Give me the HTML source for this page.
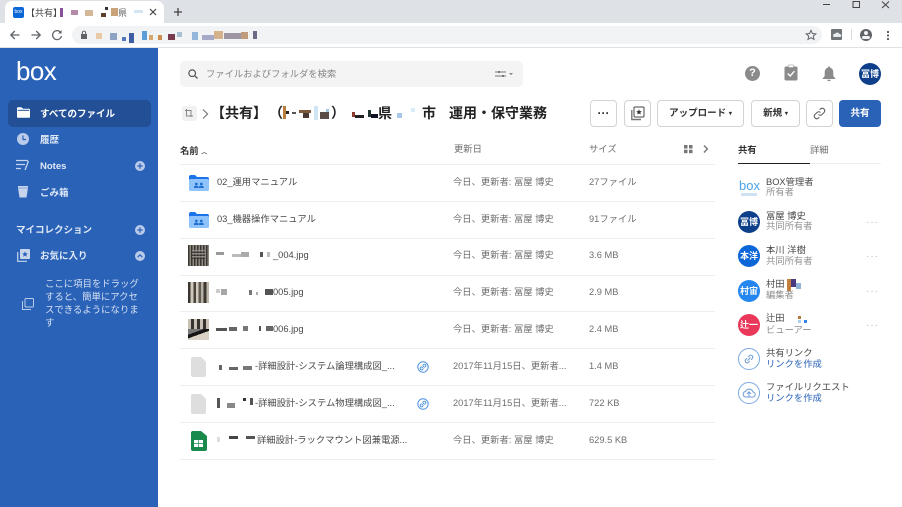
<!DOCTYPE html>
<html lang="ja"><head><meta charset="utf-8"><title>Box</title>
<style>
html,body{margin:0;padding:0;width:902px;height:507px;overflow:hidden;background:#fff}
body{position:relative;font-family:"Liberation Sans","Noto Sans CJK JP",sans-serif;color:#222;filter:blur(.3px)}
.a,.t{position:absolute}
.t{white-space:nowrap;line-height:14px;margin-top:2px}
.g{color:#6f6f6f;font-size:9.3px;margin-top:0}
.n{color:#484848;font-size:9.3px;margin-top:0}
.s{color:#fff;font-size:9.5px;font-weight:700}
.h{font-size:14px;line-height:16px;font-weight:700;color:#222;margin-top:0}
.line{position:absolute;left:180px;width:535px;height:1px;background:#eeeeee}
.btn{position:absolute;top:100px;height:27px;border:1px solid #d3d3d3;border-radius:4px;box-sizing:border-box;background:#fff;font-size:9.5px;font-weight:700;color:#333;text-align:center;line-height:25px}
.av{position:absolute;left:738px;width:22px;height:22px;border-radius:50%;color:#fff;font-size:9px;font-weight:700;text-align:center;line-height:22px}
.d{position:absolute;left:866px;color:#b5b5b5;font-size:10px;letter-spacing:1px;line-height:10px}
.b{position:absolute}
.thumb{position:absolute;left:188px;width:21px;height:21px}
svg{position:absolute;overflow:visible}
</style></head><body>

<!-- browser chrome -->
<div class="a" style="left:0;top:0;width:902px;height:23px;background:#dee1e6"></div>
<div class="a" style="left:5px;top:1px;width:159px;height:22px;background:#fff;border-radius:7px 7px 0 0"></div>
<div class="a" style="left:13px;top:7px;width:11px;height:11px;background:#0b66d8;border-radius:2px;color:#fff;font-size:5px;line-height:11px;text-align:center">box</div>
<div class="t" style="left:26px;top:4px;font-size:9px;color:#444">【共有】</div>
<div class="b" style="left:60px;top:8px;width:3px;height:9px;background:#8a4f96"></div>
<div class="b" style="left:71px;top:10px;width:7px;height:5px;background:#b58aa8"></div>
<div class="b" style="left:85px;top:10px;width:8px;height:6px;background:#d3b89a"></div>
<div class="b" style="left:101px;top:13px;width:5px;height:4px;background:#5d4030"></div>
<div class="b" style="left:105px;top:7px;width:3px;height:3px;background:#333"></div>
<div class="b" style="left:111px;top:8px;width:7px;height:8px;background:#c9a27a"></div>
<div class="t" style="left:118px;top:4px;font-size:9px;color:#666">県</div>
<div class="b" style="left:134px;top:10px;width:9px;height:3px;background:#d5e6f2"></div>
<svg style="left:149px;top:8px" width="8" height="8"><path d="M1 1L7 7M7 1L1 7" stroke="#444" stroke-width="1.2"/></svg>
<svg style="left:173px;top:7px" width="10" height="10"><path d="M5 1V9M1 5H9" stroke="#444" stroke-width="1.3"/></svg>
<svg style="left:822px;top:0" width="80" height="12"><path d="M1 4.5H8" stroke="#444" stroke-width="1"/><rect x="31" y="1.5" width="6.5" height="6" fill="none" stroke="#444" stroke-width="1"/><path d="M60 1.5L67 8M67 1.5L60 8" stroke="#444" stroke-width="1"/></svg>

<div class="a" style="left:0;top:23px;width:902px;height:24px;background:#fff"></div>
<div class="a" style="left:72px;top:26px;width:750px;height:18px;background:#f1f3f4;border-radius:9px"></div>
<svg style="left:9px;top:29px" width="12" height="12"><path d="M10.5 6H2M5.8 2L1.8 6L5.8 10" fill="none" stroke="#5f6368" stroke-width="1.3"/></svg>
<svg style="left:30px;top:29px" width="12" height="12"><path d="M1.5 6H10M6.2 2L10.2 6L6.2 10" fill="none" stroke="#5f6368" stroke-width="1.3"/></svg>
<svg style="left:51px;top:29px" width="12" height="12"><path d="M9.7 3.4A4.5 4.5 0 1 0 10.5 7" fill="none" stroke="#5f6368" stroke-width="1.2"/><path d="M10.6 1V4.5H7.1Z" fill="#5f6368"/></svg>
<svg style="left:80px;top:30px" width="8" height="10"><rect x="1" y="4" width="6" height="5" fill="#5f6368"/><path d="M2.3 4V2.8a1.7 1.7 0 0 1 3.4 0V4" fill="none" stroke="#5f6368"/></svg>
<!-- URL mosaic -->
<div class="b" style="left:96px;top:33px;width:6px;height:6px;background:#e8c9a8"></div>
<div class="b" style="left:110px;top:33px;width:7px;height:7px;background:#8ea2c2"></div>
<div class="b" style="left:122px;top:37px;width:4px;height:4px;background:#5577bb"></div>
<div class="b" style="left:129px;top:33px;width:5px;height:10px;background:#3e5fa5"></div>
<div class="b" style="left:142px;top:31px;width:5px;height:9px;background:#5e9ed6"></div>
<div class="b" style="left:149px;top:35px;width:4px;height:5px;background:#d7a56f"></div>
<div class="b" style="left:158px;top:35px;width:4px;height:5px;background:#cc8c4e"></div>
<div class="b" style="left:168px;top:34px;width:7px;height:6px;background:#7a3a4e"></div>
<div class="b" style="left:177px;top:32px;width:5px;height:5px;background:#a8bfd4"></div>
<div class="b" style="left:192px;top:32px;width:6px;height:8px;background:#94b6da"></div>
<div class="b" style="left:202px;top:35px;width:12px;height:5px;background:#a7a9c9"></div>
<div class="b" style="left:214px;top:31px;width:9px;height:8px;background:#d5b18c"></div>
<div class="b" style="left:224px;top:33px;width:17px;height:6px;background:#9d95a3"></div>
<div class="b" style="left:241px;top:32px;width:7px;height:7px;background:#c09a7c"></div>
<div class="b" style="left:253px;top:31px;width:4px;height:8px;background:#6e6a85"></div>
<svg style="left:805px;top:29px" width="12" height="12"><path d="M6 1.4L7.4 4.5L10.8 4.9L8.3 7.1L9 10.4L6 8.7L3 10.4L3.7 7.1L1.2 4.9L4.6 4.5Z" fill="none" stroke="#5f6368" stroke-width="1"/></svg>
<div class="a" style="left:831px;top:29px;width:11px;height:11px;background:#70757a;border-radius:1px"></div>
<svg style="left:833px;top:31px" width="8" height="7"><path d="M1 6H7A1.5 1.5 0 0 0 6.5 3A2.5 2.5 0 0 0 2 2.8A1.7 1.7 0 0 0 1 6Z" fill="#e8eaed"/></svg>
<div class="a" style="left:851px;top:29px;width:1px;height:11px;background:#dadce0"></div>
<div class="a" style="left:860px;top:29px;width:12px;height:12px;background:#5f6368;border-radius:50%"></div>
<div class="a" style="left:864px;top:31px;width:4px;height:4px;background:#f1f3f4;border-radius:50%"></div>
<div class="a" style="left:862px;top:36px;width:8px;height:2.5px;background:#f1f3f4;border-radius:2px"></div>
<div class="a" style="left:887px;top:31px;width:2px;height:2px;background:#5f6368;box-shadow:0 3.5px 0 #5f6368,0 7px 0 #5f6368"></div>
<div class="a" style="left:0;top:47px;width:902px;height:1px;background:#dfe1e5"></div>

<!-- sidebar -->
<div class="a" style="left:0;top:48px;width:158px;height:459px;background:#2a62b8"></div>
<div class="t" style="left:16px;top:52px;margin-top:1px;font-size:26px;line-height:36px;color:#fff;font-weight:400;letter-spacing:-.6px;font-family:'Liberation Sans',sans-serif">box</div>
<div class="a" style="left:8px;top:100px;width:143px;height:27px;background:#224f95;border-radius:5px"></div>
<svg style="left:17px;top:107px" width="13" height="11"><path d="M0 1.2Q0 .3 1 .3H4.5L6 1.8H12Q13 1.8 13 2.8V10Q13 10.8 12 10.8H1Q0 10.8 0 10Z" fill="#fff"/><rect x="0.8" y="2.8" width="11.4" height="1" fill="#224f95"/></svg>
<div class="t s" style="left:40px;top:106px">すべてのファイル</div>
<svg style="left:17px;top:133px" width="12" height="12"><circle cx="6" cy="6" r="6" fill="#b9cbe8"/><path d="M6 2.5V6.5H9" fill="none" stroke="#2a62b8" stroke-width="1.2"/></svg>
<div class="t s" style="left:40px;top:132px;color:#dfe8f6">履歴</div>
<svg style="left:16px;top:159px" width="14" height="12"><path d="M0 1.5H12M0 5.5H9M0 9.5H5" stroke="#c6d5ec" stroke-width="1.3"/><path d="M12.5 2L9 11" stroke="#c6d5ec" stroke-width="1.3"/></svg>
<div class="t s" style="left:40px;top:158px;color:#dfe8f6">Notes</div>
<svg style="left:135px;top:161px" width="10" height="10"><circle cx="5" cy="5" r="5" fill="#b9cbe8"/><path d="M5 2.3V7.7M2.3 5H7.7" stroke="#2a62b8" stroke-width="1.2"/></svg>
<svg style="left:18px;top:186px" width="10" height="12"><path d="M0 0H10V2L8.5 11.5H1.5L0 2Z" fill="#c6d5ec"/><rect x="0" y="1.5" width="10" height="1" fill="#2a62b8" opacity=".4"/></svg>
<div class="t s" style="left:40px;top:185px;color:#dfe8f6">ごみ箱</div>
<div class="t s" style="left:16px;top:222px;color:#dfe8f6">マイコレクション</div>
<svg style="left:135px;top:225px" width="10" height="10"><circle cx="5" cy="5" r="5" fill="#b9cbe8"/><path d="M5 2.3V7.7M2.3 5H7.7" stroke="#2a62b8" stroke-width="1.2"/></svg>
<svg style="left:17px;top:249px" width="13" height="13"><rect x="3" y="0" width="10" height="10" rx="1" fill="#c6d5ec"/><path d="M0.7 3V12.3H10" fill="none" stroke="#c6d5ec" stroke-width="1.2"/><path d="M8 2.2L8.8 4.2L10.8 4.4L9.3 5.7L9.8 7.7L8 6.6L6.2 7.7L6.7 5.7L5.2 4.4L7.2 4.2Z" fill="#2a62b8"/></svg>
<div class="t s" style="left:40px;top:248px;color:#dfe8f6">お気に入り</div>
<svg style="left:135px;top:251px" width="10" height="10"><circle cx="5" cy="5" r="5" fill="#b9cbe8"/><path d="M2.6 6.2L5 3.8L7.4 6.2" fill="none" stroke="#2a62b8" stroke-width="1.2"/></svg>
<svg style="left:22px;top:298px" width="12" height="12"><rect x="3" y="0.5" width="8.5" height="8.5" rx="1" fill="none" stroke="#b9cbe8" stroke-width="1"/><path d="M0.5 3V11.5H9" fill="none" stroke="#b9cbe8" stroke-width="1"/></svg>
<div class="t" style="left:45px;top:275px;font-size:9.4px;line-height:13.1px;color:#d5e0f2;white-space:normal;width:96px">ここに項目をドラッグすると、簡単にアクセスできるようになります</div>

<!-- top search -->
<div class="a" style="left:180px;top:61px;width:343px;height:26px;background:#f4f4f4;border-radius:5px"></div>
<svg style="left:188px;top:69px" width="10" height="10"><circle cx="4.2" cy="4.2" r="3.3" fill="none" stroke="#555" stroke-width="1.2"/><path d="M6.7 6.7L9.5 9.5" stroke="#555" stroke-width="1.3"/></svg>
<div class="t" style="left:206px;top:65px;font-size:9.3px;color:#858585">ファイルおよびフォルダを検索</div>
<svg style="left:495px;top:70px" width="20" height="8"><path d="M0 2H11M0 6H11" stroke="#777" stroke-width="1"/><rect x="3" y="1" width="2" height="2" fill="#777"/><rect x="7" y="5" width="2" height="2" fill="#777"/><path d="M14 3H18L16 5.2Z" fill="#888"/></svg>

<!-- top right icons -->
<div class="a" style="left:745px;top:66px;width:15px;height:15px;border-radius:50%;background:#8b8b8b;color:#fff;font-size:11px;font-weight:700;line-height:15px;text-align:center">?</div>
<svg style="left:784px;top:65px" width="14" height="16"><rect x="0.5" y="1.5" width="13" height="14" rx="1.5" fill="#8b8b8b"/><rect x="4" y="0" width="6" height="2.5" rx="1" fill="#fff" stroke="#8b8b8b" stroke-width=".6"/><path d="M3.8 8.5L6.2 11L10.4 6.2" fill="none" stroke="#fff" stroke-width="1.4"/></svg>
<svg style="left:822px;top:66px" width="14" height="15"><path d="M7 0.5C7.8 .5 8.3 1 8.3 1.7C10.6 2.4 11.3 4.3 11.3 6.5V10L13.5 12.7V13H.5V12.7L2.7 10V6.5C2.7 4.3 3.4 2.4 5.7 1.7C5.7 1 6.2 .5 7 .5Z" fill="#8b8b8b"/><path d="M5.2 13.7H8.8A1.8 1.4 0 0 1 5.2 13.7Z" fill="#8b8b8b"/></svg>
<div class="a" style="left:859px;top:63px;width:22px;height:22px;border-radius:50%;background:#0d3f8a;color:#fff;font-size:9px;font-weight:700;line-height:22px;text-align:center;font-family:'Noto Sans CJK JP',sans-serif">冨博</div>

<!-- breadcrumb/title -->
<div class="a" style="left:182px;top:106px;width:15px;height:15px;background:#f1f1f1;border-radius:3px"></div>
<svg style="left:185px;top:109px" width="9" height="9"><path d="M1.5 0V7H8M0 1.5H6V8" fill="none" stroke="#888" stroke-width="1"/></svg>
<svg style="left:202px;top:109px" width="7" height="10"><path d="M1 .5L5.6 5L1 9.5" fill="none" stroke="#777" stroke-width="1.2"/></svg>
<div class="t h" style="left:211px;top:105px">【共有】</div>
<div class="t h" style="left:269px;top:105px">（</div>
<div class="b" style="left:283px;top:106px;width:3px;height:13px;background:#b9803d"></div>
<div class="b" style="left:286px;top:111px;width:3px;height:3px;background:#222"></div>
<div class="b" style="left:292px;top:112px;width:4px;height:2px;background:#555"></div>
<div class="b" style="left:299px;top:110px;width:12px;height:3px;background:#7e5a3c"></div>
<div class="b" style="left:303px;top:113px;width:6px;height:5px;background:#4a3a33"></div>
<div class="b" style="left:314px;top:106px;width:4px;height:14px;background:#cfe5f4"></div>
<div class="b" style="left:320px;top:112px;width:9px;height:7px;background:#5b4c48"></div>
<div class="b" style="left:326px;top:109px;width:3px;height:3px;background:#a5c9e0"></div>
<div class="t h" style="left:331px;top:105px">）</div>
<div class="b" style="left:352px;top:112px;width:3px;height:5px;background:#8b3a2e"></div>
<div class="b" style="left:355px;top:115px;width:9px;height:3px;background:#222"></div>
<div class="b" style="left:368px;top:110px;width:3px;height:7px;background:#233"></div>
<div class="b" style="left:371px;top:114px;width:7px;height:4px;background:#112"></div>
<div class="t h" style="left:378px;top:105px">県</div>
<div class="b" style="left:397px;top:113px;width:5px;height:5px;background:#a7c8e8"></div>
<div class="b" style="left:411px;top:108px;width:4px;height:4px;background:#d7eef7"></div>
<div class="t h" style="left:422px;top:105px">市</div>
<div class="t h" style="left:449px;top:105px">運用・保守業務</div>

<!-- buttons -->
<div class="btn" style="left:590px;width:27px;font-size:12px;line-height:25px">···</div>
<div class="btn" style="left:624px;width:27px"></div>
<svg style="left:631px;top:106px" width="14" height="15"><rect x="3" y="1" width="10" height="10" rx="1" fill="none" stroke="#444" stroke-width="1"/><path d="M.8 4V13.5H10" fill="none" stroke="#777" stroke-width="1.4"/><path d="M8 3.2L8.8 5.1L10.8 5.3L9.3 6.6L9.8 8.5L8 7.5L6.2 8.5L6.7 6.6L5.2 5.3L7.2 5.1Z" fill="#333"/></svg>
<div class="btn" style="left:657px;width:87px">アップロード <span style="font-size:6px;vertical-align:1px">▾</span></div>
<div class="btn" style="left:751px;width:49px">新規 <span style="font-size:6px;vertical-align:1px">▾</span></div>
<div class="btn" style="left:806px;width:27px"></div>
<svg style="left:813px;top:107px" width="13" height="13"><path d="M5.5 7.5A2.4 2.4 0 0 0 9 7.5L11.2 5.3A2.5 2.5 0 0 0 7.7 1.8L6.7 2.8M7.5 5.5A2.4 2.4 0 0 0 4 5.5L1.8 7.7A2.5 2.5 0 0 0 5.3 11.2L6.3 10.2" fill="none" stroke="#555" stroke-width="1"/></svg>
<div class="a" style="left:839px;top:100px;width:42px;height:27px;background:#2a62b8;border-radius:4px;color:#fff;font-size:9.5px;font-weight:700;text-align:center;line-height:27px">共有</div>

<!-- table header -->
<div class="t" style="left:180px;top:142px;font-size:9.3px;font-weight:700;color:#333">名前 <span style="font-size:6px;color:#555;vertical-align:0">︿</span></div>
<div class="t g" style="left:454px;top:142px">更新日</div>
<div class="t g" style="left:589px;top:142px">サイズ</div>
<svg style="left:684px;top:145px" width="9" height="8"><rect x="0" y="0" width="3.5" height="3.5" fill="#777"/><rect x="5" y="0" width="3.5" height="3.5" fill="#777"/><rect x="0" y="4.7" width="3.5" height="3.5" fill="#777"/><rect x="5" y="4.7" width="3.5" height="3.5" fill="#777"/></svg>
<svg style="left:703px;top:145px" width="6" height="8"><path d="M1 .5L4.4 4L1 7.5" fill="none" stroke="#777" stroke-width="1.4"/></svg>

<div class="line" style="top:164px"></div>
<div class="line" style="top:201px"></div>
<div class="line" style="top:238px"></div>
<div class="line" style="top:275px"></div>
<div class="line" style="top:311px"></div>
<div class="line" style="top:348px"></div>
<div class="line" style="top:385px"></div>
<div class="line" style="top:422px"></div>
<div class="line" style="top:459px"></div>

<!-- row 1 -->
<svg style="left:189px;top:175px" width="20" height="16"><path d="M0 2Q0 0 2 0H6L8 2H18Q20 2 20 4V6H0Z" fill="#1a73e8"/><rect x="0" y="4" width="20" height="12" rx="1.5" fill="#8fc3fb"/><circle cx="7.3" cy="9" r="1.4" fill="#1f6fd0"/><circle cx="12.3" cy="9" r="1.4" fill="#1f6fd0"/><path d="M5 13V12Q5 10.8 7.3 10.8T9.6 12V13ZM10 13V12Q10 10.8 12.3 10.8T14.7 12V13Z" fill="#1f6fd0"/></svg>
<div class="t n" style="left:217px;top:175px">02_運用マニュアル</div>
<div class="t g" style="left:453px;top:175px">今日、更新者: 冨屋 博史</div>
<div class="t g" style="left:589px;top:175px">27ファイル</div>
<!-- row 2 -->
<svg style="left:189px;top:212px" width="20" height="16"><path d="M0 2Q0 0 2 0H6L8 2H18Q20 2 20 4V6H0Z" fill="#1a73e8"/><rect x="0" y="4" width="20" height="12" rx="1.5" fill="#8fc3fb"/><circle cx="7.3" cy="9" r="1.4" fill="#1f6fd0"/><circle cx="12.3" cy="9" r="1.4" fill="#1f6fd0"/><path d="M5 13V12Q5 10.8 7.3 10.8T9.6 12V13ZM10 13V12Q10 10.8 12.3 10.8T14.7 12V13Z" fill="#1f6fd0"/></svg>
<div class="t n" style="left:217px;top:212px">03_機器操作マニュアル</div>
<div class="t g" style="left:453px;top:212px">今日、更新者: 冨屋 博史</div>
<div class="t g" style="left:589px;top:212px">91ファイル</div>
<!-- row 3 -->
<div class="thumb" style="top:245px;background:repeating-linear-gradient(90deg,#3a3632 0 1.5px,#8d8780 1.5px 3px),#555"></div>
<div class="a" style="left:192px;top:250px;width:13px;height:9px;background:repeating-linear-gradient(0deg,#2f2c29 0 1.5px,#a39d95 1.5px 3px);opacity:.7"></div>
<div class="b" style="left:216px;top:252px;width:8px;height:3px;background:#9a9a9a"></div>
<div class="b" style="left:232px;top:254px;width:10px;height:3px;background:#bbb"></div>
<div class="b" style="left:241px;top:252px;width:8px;height:5px;background:#aaa"></div>
<div class="b" style="left:260px;top:252px;width:3px;height:5px;background:#555"></div>
<div class="b" style="left:267px;top:252px;width:3px;height:5px;background:#bbb"></div>
<div class="t n" style="left:273px;top:248px">_004.jpg</div>
<div class="t g" style="left:453px;top:248px">今日、更新者: 冨屋 博史</div>
<div class="t g" style="left:589px;top:248px">3.6 MB</div>
<!-- row 4 -->
<div class="thumb" style="top:282px;background:linear-gradient(90deg,#3a3530 0 12%,#cfc8bb 12% 25%,#4b443d 25% 38%,#d2ccc0 38% 50%,#615a50 50% 62%,#b7b0a4 62% 75%,#3d3832 75% 88%,#bfb7a9 88%)"></div>
<div class="b" style="left:216px;top:289px;width:4px;height:4px;background:#ccc"></div>
<div class="b" style="left:221px;top:289px;width:6px;height:6px;background:#a6a6a6"></div>
<div class="b" style="left:249px;top:290px;width:3px;height:5px;background:#777"></div>
<div class="b" style="left:256px;top:292px;width:2px;height:3px;background:#aaa"></div>
<div class="b" style="left:265px;top:289px;width:8px;height:6px;background:#555"></div>
<div class="t n" style="left:273px;top:285px">005.jpg</div>
<div class="t g" style="left:453px;top:285px">今日、更新者: 冨屋 博史</div>
<div class="t g" style="left:589px;top:285px">2.9 MB</div>
<!-- row 5 -->
<div class="thumb" style="top:319px;background:linear-gradient(160deg,#777 0 55%,#151515 55% 68%,#d8d2c6 68%),#777"></div>
<div class="a" style="left:188px;top:319px;width:21px;height:10px;background:repeating-linear-gradient(90deg,#c9c2b4 0 3px,#37322d 3px 6px)"></div>
<div class="b" style="left:216px;top:328px;width:11px;height:3px;background:#555"></div>
<div class="b" style="left:229px;top:327px;width:8px;height:4px;background:#666"></div>
<div class="b" style="left:243px;top:326px;width:5px;height:5px;background:#777"></div>
<div class="b" style="left:259px;top:326px;width:2px;height:5px;background:#555"></div>
<div class="b" style="left:266px;top:326px;width:7px;height:5px;background:#666"></div>
<div class="t n" style="left:273px;top:322px">006.jpg</div>
<div class="t g" style="left:453px;top:322px">今日、更新者: 冨屋 博史</div>
<div class="t g" style="left:589px;top:322px">2.4 MB</div>
<!-- row 6 -->
<svg style="left:191px;top:357px" width="15" height="20"><path d="M2 0H10L15 5V18Q15 20 13 20H2Q0 20 0 18V2Q0 0 2 0Z" fill="#dedede"/></svg>
<div class="b" style="left:219px;top:365px;width:3px;height:5px;background:#666"></div>
<div class="b" style="left:229px;top:367px;width:9px;height:3px;background:#666"></div>
<div class="b" style="left:243px;top:366px;width:9px;height:4px;background:#777"></div>
<div class="t n" style="left:255px;top:359px">-詳細設計-システム論理構成図_...</div>
<svg style="left:417px;top:361px" width="12" height="12"><circle cx="6" cy="6" r="5.2" fill="#fff" stroke="#4a90e2" stroke-width="1"/><path d="M4.8 7.2L7.2 4.8M4.5 5.5L3.6 6.4A1.4 1.4 0 0 0 5.6 8.4L6.5 7.5M5.5 4.5L6.4 3.6A1.4 1.4 0 0 1 8.4 5.6L7.5 6.5" fill="none" stroke="#4a90e2" stroke-width=".9"/></svg>
<div class="t g" style="left:453px;top:359px">2017年11月15日、更新者...</div>
<div class="t g" style="left:589px;top:359px">1.4 MB</div>
<!-- row 7 -->
<svg style="left:191px;top:394px" width="15" height="20"><path d="M2 0H10L15 5V18Q15 20 13 20H2Q0 20 0 18V2Q0 0 2 0Z" fill="#dedede"/></svg>
<div class="b" style="left:217px;top:398px;width:3px;height:10px;background:#555"></div>
<div class="b" style="left:227px;top:403px;width:8px;height:5px;background:#888"></div>
<div class="b" style="left:243px;top:398px;width:3px;height:3px;background:#333"></div>
<div class="b" style="left:250px;top:398px;width:3px;height:7px;background:#555"></div>
<div class="t n" style="left:255px;top:396px">-詳細設計-システム物理構成図_...</div>
<svg style="left:417px;top:398px" width="12" height="12"><circle cx="6" cy="6" r="5.2" fill="#fff" stroke="#4a90e2" stroke-width="1"/><path d="M4.8 7.2L7.2 4.8M4.5 5.5L3.6 6.4A1.4 1.4 0 0 0 5.6 8.4L6.5 7.5M5.5 4.5L6.4 3.6A1.4 1.4 0 0 1 8.4 5.6L7.5 6.5" fill="none" stroke="#4a90e2" stroke-width=".9"/></svg>
<div class="t g" style="left:453px;top:396px">2017年11月15日、更新者...</div>
<div class="t g" style="left:589px;top:396px">722 KB</div>
<!-- row 8 -->
<svg style="left:191px;top:431px" width="16" height="20"><path d="M2 0H10L16 5V18Q16 20 14 20H2Q0 20 0 18V2Q0 0 2 0Z" fill="#198a4c"/><rect x="3" y="9" width="9" height="7" fill="#fff"/><path d="M7.5 9V16M3 12.5H12" stroke="#198a4c" stroke-width=".7"/></svg>
<div class="b" style="left:217px;top:437px;width:3px;height:5px;background:#ddd"></div>
<div class="b" style="left:229px;top:436px;width:9px;height:3px;background:#444"></div>
<div class="b" style="left:246px;top:436px;width:9px;height:3px;background:#555"></div>
<div class="t n" style="left:257px;top:433px">詳細設計-ラックマウント図兼電源...</div>
<div class="t g" style="left:453px;top:433px">今日、更新者: 冨屋 博史</div>
<div class="t g" style="left:589px;top:433px">629.5 KB</div>

<!-- right panel -->
<div class="t" style="left:738px;top:141px;font-size:9.3px;font-weight:700;color:#333">共有</div>
<div class="t g" style="left:810px;top:143px">詳細</div>
<div class="a" style="left:738px;top:163px;width:143px;height:1px;background:#eee"></div>
<div class="a" style="left:738px;top:163px;width:72px;height:1px;background:#222"></div>

<div class="t" style="left:739px;top:177px;font-size:13px;line-height:14px;color:#4aa3e8">box</div>
<div class="a" style="left:741px;top:193px;width:16px;height:3px;background:#cfe2f3"></div>
<div class="t n" style="left:766px;top:175px">BOX管理者</div>
<div class="t g" style="left:766px;top:185px;color:#909090">所有者</div>

<div class="av" style="top:211px;background:#0d3f8a;font-family:'Noto Sans CJK JP',sans-serif">冨博</div>
<div class="t n" style="left:766px;top:209px">冨屋 博史</div>
<div class="t g" style="left:766px;top:219px;color:#909090">共同所有者</div>
<div class="d" style="top:218px">···</div>

<div class="av" style="top:245px;background:#0b66d8">本洋</div>
<div class="t n" style="left:766px;top:243px">本川 洋樹</div>
<div class="t g" style="left:766px;top:254px;color:#909090">共同所有者</div>
<div class="d" style="top:252px">···</div>

<div class="av" style="top:280px;background:#2486ee">村宙</div>
<div class="t n" style="left:766px;top:277px">村田</div>
<div class="b" style="left:787px;top:279px;width:4px;height:12px;background:#c27f3d"></div>
<div class="b" style="left:791px;top:279px;width:5px;height:8px;background:#4b3a7d"></div>
<div class="b" style="left:796px;top:283px;width:5px;height:6px;background:#8fb3d9"></div>
<div class="t g" style="left:766px;top:288px;color:#909090">編集者</div>
<div class="d" style="top:287px">···</div>

<div class="av" style="top:314px;background:#e9385a">辻一</div>
<div class="t n" style="left:766px;top:311px">辻田</div>
<div class="b" style="left:798px;top:316px;width:3px;height:3px;background:#b5793c"></div>
<div class="b" style="left:798px;top:320px;width:3px;height:3px;background:#a9d0ee"></div>
<div class="b" style="left:804px;top:320px;width:3px;height:3px;background:#2e86e6"></div>
<div class="t g" style="left:766px;top:323px;color:#909090">ビューアー</div>
<div class="d" style="top:321px">···</div>

<svg style="left:738px;top:348px" width="22" height="22"><circle cx="11" cy="11" r="10.5" fill="#fff" stroke="#7aa9e0" stroke-width="1"/><path d="M9.5 12.5L12.5 9.5M9 10.2L7.6 11.6A2 2 0 0 0 10.4 14.4L11.8 13M10.2 9L11.6 7.6A2 2 0 0 1 14.4 10.4L13 11.8" fill="none" stroke="#6d9cd6" stroke-width="1"/></svg>
<div class="t n" style="left:766px;top:346px">共有リンク</div>
<div class="t" style="left:766px;top:355px;font-size:9.3px;color:#2a62b8">リンクを作成</div>

<svg style="left:738px;top:382px" width="22" height="22"><circle cx="11" cy="11" r="10.5" fill="#fff" stroke="#7aa9e0" stroke-width="1"/><path d="M7.5 15H14.5A2.5 2.5 0 0 0 15 10A4 4 0 0 0 7.5 9.5A2.8 2.8 0 0 0 7.5 15ZM11 15V10M9 11.8L11 9.8L13 11.8" fill="none" stroke="#6d9cd6" stroke-width="1"/></svg>
<div class="t n" style="left:766px;top:380px">ファイルリクエスト</div>
<div class="t" style="left:766px;top:389px;font-size:9.3px;color:#2a62b8">リンクを作成</div>

</body></html>
